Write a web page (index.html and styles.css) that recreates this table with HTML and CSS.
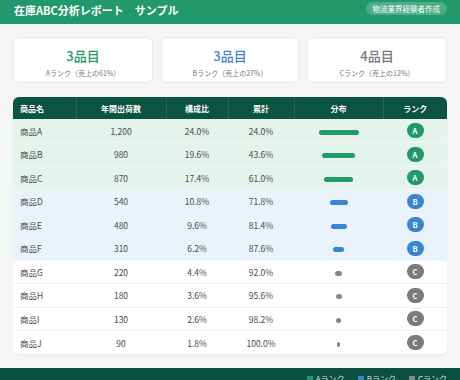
FILE: index.html
```html
<!DOCTYPE html>
<html lang="ja">
<head>
<meta charset="utf-8">
<link rel="stylesheet" href="styles.css">
</head>
<body>
<header class="topbar">
  <h1 class="title">在庫ABC分析レポート　サンプル</h1>
  <span class="author">物流業界経験者作成</span>
</header>
<main class="main">
  <section class="cards">
    <div class="card">
      <div class="card-num num-a">3品目</div>
      <div class="card-sub">Aランク（売上の61%）</div>
    </div>
    <div class="card">
      <div class="card-num num-b">3品目</div>
      <div class="card-sub">Bランク（売上の27%）</div>
    </div>
    <div class="card">
      <div class="card-num num-c">4品目</div>
      <div class="card-sub">Cランク（売上の12%）</div>
    </div>
  </section>
  <div class="table-wrap">
    <table class="abc">
      <colgroup>
        <col class="c1"><col class="c2"><col class="c3"><col class="c4"><col class="c5"><col class="c6">
      </colgroup>
      <thead>
        <tr><th class="left">商品名</th><th>年間出荷数</th><th>構成比</th><th>累計</th><th>分布</th><th>ランク</th></tr>
      </thead>
      <tbody>
        <tr class="ra"><td class="left">商品A</td><td>1,200</td><td>24.0%</td><td>24.0%</td><td><span class="bar bar-a" style="width:40px"></span></td><td><span class="rank rank-a">A</span></td></tr>
        <tr class="ra"><td class="left">商品B</td><td>980</td><td>19.6%</td><td>43.6%</td><td><span class="bar bar-a" style="width:32.7px"></span></td><td><span class="rank rank-a">A</span></td></tr>
        <tr class="ra"><td class="left">商品C</td><td>870</td><td>17.4%</td><td>61.0%</td><td><span class="bar bar-a" style="width:29px"></span></td><td><span class="rank rank-a">A</span></td></tr>
        <tr class="rb"><td class="left">商品D</td><td>540</td><td>10.8%</td><td>71.8%</td><td><span class="bar bar-b" style="width:18px"></span></td><td><span class="rank rank-b">B</span></td></tr>
        <tr class="rb"><td class="left">商品E</td><td>480</td><td>9.6%</td><td>81.4%</td><td><span class="bar bar-b" style="width:16px"></span></td><td><span class="rank rank-b">B</span></td></tr>
        <tr class="rb"><td class="left">商品F</td><td>310</td><td>6.2%</td><td>87.6%</td><td><span class="bar bar-b" style="width:10.3px"></span></td><td><span class="rank rank-b">B</span></td></tr>
        <tr class="rc"><td class="left">商品G</td><td>220</td><td>4.4%</td><td>92.0%</td><td><span class="bar bar-c" style="width:7.3px"></span></td><td><span class="rank rank-c">C</span></td></tr>
        <tr class="rc"><td class="left">商品H</td><td>180</td><td>3.6%</td><td>95.6%</td><td><span class="bar bar-c" style="width:6px"></span></td><td><span class="rank rank-c">C</span></td></tr>
        <tr class="rc"><td class="left">商品I</td><td>130</td><td>2.6%</td><td>98.2%</td><td><span class="bar bar-c" style="width:4.3px"></span></td><td><span class="rank rank-c">C</span></td></tr>
        <tr class="rc"><td class="left">商品J</td><td>90</td><td>1.8%</td><td>100.0%</td><td><span class="bar bar-c" style="width:3px"></span></td><td><span class="rank rank-c">C</span></td></tr>
      </tbody>
    </table>
  </div>
</main>
<footer class="footer">
  <span class="legend"><i class="sq sq-a"></i>Aランク</span>
  <span class="legend"><i class="sq sq-b"></i>Bランク</span>
  <span class="legend"><i class="sq sq-c"></i>Cランク</span>
</footer>
</body>
</html>
```

FILE: styles.css
```css
* { box-sizing: border-box; }
html, body { margin: 0; padding: 0; }
body {
  background: #f4f6f5;
  font-family: "Noto Sans CJK JP", "Noto Sans", sans-serif;
  color: #444;
  width: 460px;
}
.topbar {
  height: 24px;
  background: #21996d;
  display: flex;
  justify-content: space-between;
  align-items: flex-start;
  padding: 0 13px 0 14px;
}
.title {
  margin: 2px 0 0;
  font-size: 11px;
  line-height: 16px;
  font-weight: 700;
  color: #fff;
}
.author {
  margin-top: 2px;
  height: 13px;
  line-height: 13px;
  padding: 0 7px;
  border-radius: 7px;
  background: rgba(255,255,255,0.2);
  color: #fff;
  font-size: 7.5px;
}
.main {
  padding: 13px 13px 14px;
}
.cards {
  display: grid;
  grid-template-columns: 140px 138px 140px;
  gap: 8px;
  margin-bottom: 14px;
}
.card {
  height: 46px;
  background: #fff;
  border: 1px solid #e6e9e8;
  border-radius: 6px;
  text-align: center;
  padding-top: 9px;
}
.card-num {
  font-size: 13px;
  line-height: 18px;
  font-weight: 500;
}
.num-a { color: #21996d; }
.num-b { color: #3a85d3; }
.num-c { color: #777; }
.card-sub {
  margin-top: 3px;
  font-size: 7px;
  line-height: 10px;
  color: #777;
}
.table-wrap {
  background: #fff;
  border-radius: 6px;
  overflow: hidden;
  box-shadow: 0 1px 2px rgba(0,0,0,0.06);
}
.abc {
  width: 434px;
  border-collapse: collapse;
  table-layout: fixed;
}
.c1 { width: 63px; }
.c2 { width: 90px; }
.c3 { width: 62px; }
.c4 { width: 66px; }
.c5 { width: 89px; }
.c6 { width: 64px; }
.abc th {
  height: 22px;
  background: #0c5442;
  color: #fff;
  font-size: 8px;
  font-weight: 700;
  text-align: center;
  padding: 0;
  border-left: 1px solid rgba(255,255,255,0.1);
}
.abc th:first-child { border-left: none; }
.abc td {
  height: 23.5px;
  font-size: 8.5px;
  text-align: center;
  padding: 0;
  color: #4a4a4a;
  border-bottom: 1px solid #eef0ef;
}
.abc tr:last-child td { border-bottom: none; }
.abc .left { text-align: left; padding-left: 7px; }
.ra td { background: #e4f4ed; border-bottom-color: #f0f8f4; }
.rb td { background: #eaf2fb; border-bottom-color: #f2f6fc; }
.rc td { background: #fff; }
.bar {
  display: inline-block;
  height: 5px;
  border-radius: 3px;
  vertical-align: middle;
}
.bar-a { background: #21996d; }
.bar-b { background: #3a85d3; }
.bar-c { background: #888; }
.rank {
  display: inline-block;
  width: 17px;
  height: 15px;
  line-height: 15px;
  border-radius: 8px;
  color: #fff;
  font-size: 7.5px;
  font-weight: 700;
  vertical-align: middle;
}
.rank-a { background: #21996d; }
.rank-b { background: #3a85d3; }
.rank-c { background: #7a7a7a; }
.footer {
  background: #0b4f3e;
  height: 40px;
  display: flex;
  justify-content: flex-end;
  align-items: flex-start;
  gap: 13px;
  padding: 4px 13px 0;
}
.legend {
  font-size: 8px;
  line-height: 14px;
  color: rgba(255,255,255,0.8);
  display: flex;
  align-items: center;
  gap: 3px;
}
.sq {
  display: inline-block;
  width: 6px;
  height: 6px;
  border-radius: 1px;
}
.sq-a { background: #21996d; }
.sq-b { background: #3a85d3; }
.sq-c { background: #888; }
```
